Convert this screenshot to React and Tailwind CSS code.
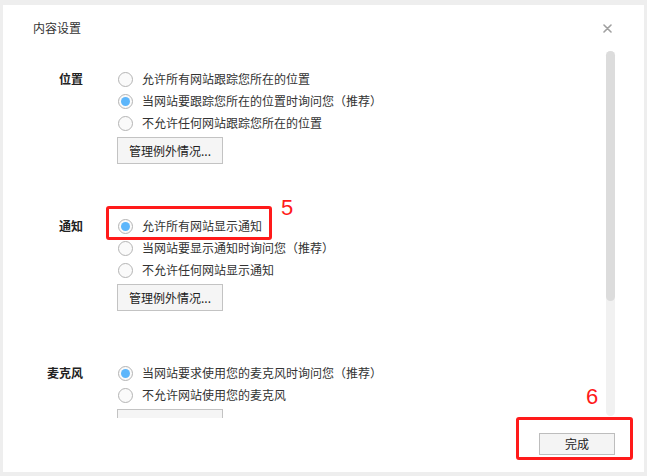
import React from 'react';

const font = { fontFamily: '"Noto Sans CJK SC", "Noto Sans", sans-serif' };

const sections = [
  {
    label: '位置',
    options: ['允许所有网站跟踪您所在的位置', '当网站要跟踪您所在的位置时询问您（推荐）', '不允许任何网站跟踪您所在的位置'],
    checked: 1,
  },
  {
    label: '通知',
    options: ['允许所有网站显示通知', '当网站要显示通知时询问您（推荐）', '不允许任何网站显示通知'],
    checked: 0,
  },
  {
    label: '麦克风',
    options: ['当网站要求使用您的麦克风时询问您（推荐）', '不允许网站使用您的麦克风'],
    checked: 0,
    clipped: true,
  },
];

const Radio = ({ checked }) => (
  <span className="w-[15px] h-[15px] rounded-full border border-[#b4b4b4] bg-[#fafafa] flex items-center justify-center shrink-0">
    {checked && <span className="w-[9px] h-[9px] rounded-full bg-[#5db6fb]" />}
  </span>
);

const Section = ({ label, options, checked, clipped }) => (
  <div className="flex">
    <div className="w-[50px] h-[22px] flex items-center justify-end text-[12px] font-bold text-[#222]">{label}</div>
    <div className="ml-[35px] flex flex-col">
      {options.map((opt, i) => (
        <div key={i} className="h-[22px] flex items-center gap-[9px]">
          <Radio checked={i === checked} />
          <span className="text-[12px] text-[#333] leading-none whitespace-nowrap [text-spacing-trim:space-all]">{opt}</span>
        </div>
      ))}
      <button className="mt-[3px] -ml-px w-[106px] h-[27px] border border-[#c3c3c3] bg-[#f5f5f5] text-[12px] text-[#222] flex items-center justify-center">
        {clipped ? '' : '管理例外情况...'}
      </button>
    </div>
  </div>
);

export default function App() {
  return (
    <div className="relative w-[647px] h-[476px] bg-[#eeeeee] pl-[3px] pr-[3px] pt-[5px] pb-[4px] overflow-hidden" style={font}>
      <div className="w-full h-full bg-white flex flex-col">
        {/* header */}
        <div className="h-[46px] shrink-0 flex items-center pl-[30px] pr-[29px]">
          <span className="text-[12px] text-[#333]">内容设置</span>
          <svg className="ml-auto mr-[3px]" width="9" height="9" viewBox="0 0 9 9">
            <path d="M1 1L8 8M8 1L1 8" stroke="#a0a0a0" strokeWidth="1.6" strokeLinecap="round" />
          </svg>
        </div>

        {/* scroll body */}
        <div className="h-[367px] shrink-0 flex overflow-hidden">
          <div className="flex-1 pl-[30px] pt-[17px] flex flex-col gap-[51px]">
            {sections.map((s) => (
              <Section key={s.label} {...s} />
            ))}
          </div>
          <div className="w-[9px] h-[365px] mr-[29px] rounded-full bg-[#f1f1f1] flex flex-col shrink-0">
            <div className="h-[250px] rounded-full bg-[#dcdcdc]" />
          </div>
        </div>

        {/* footer */}
        <div className="flex-1 flex justify-end pt-[15px] pr-[29px]">
          <button className="w-[76px] h-[22px] border border-[#bdbdbd] bg-[#f4f4f4] text-[12px] text-[#222] flex items-center justify-center">
            完成
          </button>
        </div>
      </div>

      {/* annotations */}
      <div className="absolute left-[106px] top-[206px] w-[166px] h-[34px] border-[3px] border-[#ff1a1a] rounded-[3px]" />
      <span className="absolute left-[281px] top-[194px] text-[22px] leading-[28px] text-[#ff1a1a]" style={{ fontFamily: '"Liberation Sans", sans-serif' }}>5</span>
      <div className="absolute left-[516px] top-[417px] w-[117px] h-[43px] border-[3px] border-[#ff1a1a] rounded-[3px]" />
      <span className="absolute left-[586px] top-[383px] text-[22px] leading-[28px] text-[#ff1a1a]" style={{ fontFamily: '"Liberation Sans", sans-serif' }}>6</span>
    </div>
  );
}
